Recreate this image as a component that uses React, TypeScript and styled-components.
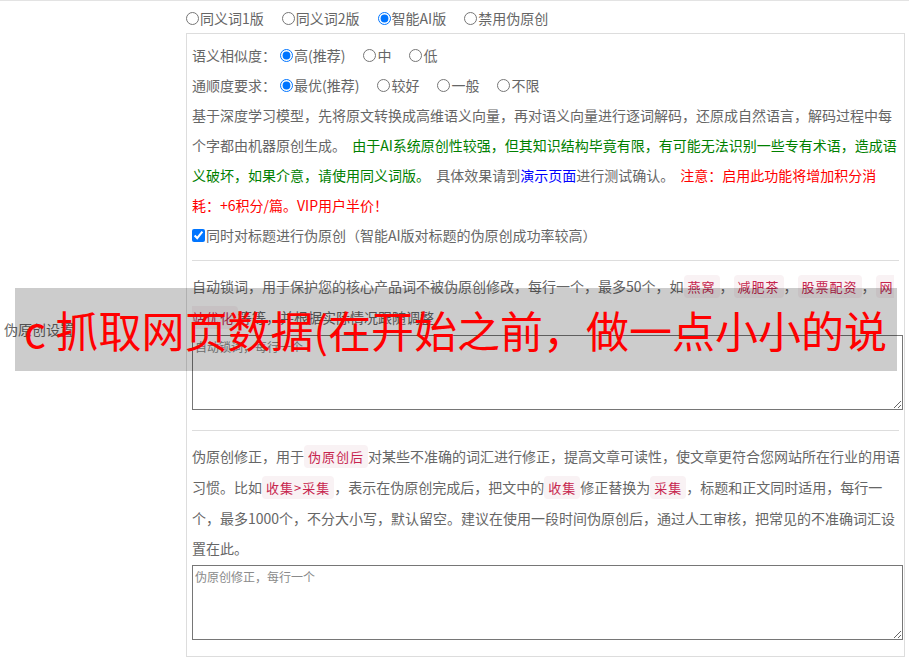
import React from 'react';
import styled, { createGlobalStyle } from 'styled-components';

const Global = createGlobalStyle`
  html, body { margin: 0; padding: 0; background: #fff; }
  body {
    font-family: "Noto Sans CJK SC", "Microsoft YaHei", sans-serif;
    font-size: 14px;
    color: #666;
  }
`;

const Table = styled.div`
  position: relative;
  width: 909px;
  border-top: 1px solid #e3e3e3;
  display: grid;
  grid-template-columns: 186px 1fr;
`;

const LabelCell = styled.div`
  display: flex;
  align-items: center;
  padding-left: 4px;
  line-height: 20px;
`;

const ContentCell = styled.div`
  padding-right: 4px;
`;

const TopRow = styled.div`
  display: flex;
  align-items: center;
  height: 30px;
  padding-top: 2px;
`;

const Row = styled.div`
  display: flex;
  align-items: center;
  height: 30px;
`;

const RowLabel = styled.span`
  margin-right: 4px;
`;

const Option = styled.label`
  display: inline-flex;
  align-items: center;
  margin-right: 18px;
  white-space: nowrap;
  input {
    width: 13px;
    height: 13px;
    margin: 0 1px 0 0;
  }
`;

const Panel = styled.div`
  border: 1px solid #ddd;
  padding: 6px 1px 16px 5px;
`;

const Para = styled.p`
  margin: 0;
  line-height: 30px;
  word-spacing: 3px;
`;

const Tone = styled.span<{ $c: string }>`
  color: ${(p) => p.$c};
`;

const Code = styled.code`
  font-family: "Noto Sans CJK SC", sans-serif;
  font-size: 13px;
  letter-spacing: 1px;
  word-spacing: 0;
  padding: 2px 4px;
  color: #c7254e;
  background: #f9f2f4;
  border-radius: 4px;
`;

const Check = styled.label`
  display: flex;
  align-items: center;
  height: 30px;
  input {
    width: 13px;
    height: 13px;
    margin: 0 1px 0 0;
  }
`;

const Divider = styled.div<{ $top?: number }>`
  height: 1px;
  background: #ddd;
  margin: ${(p) => p.$top ?? 10}px 4px 10px 0;
`;

const Area = styled.textarea`
  display: block;
  box-sizing: border-box;
  width: 100%;
  height: 75px;
  margin-top: 2px;
  border: 1px solid #767676;
  padding: 2px 2px;
  font-family: "Noto Sans CJK SC", sans-serif;
  font-size: 12px;
  color: #333;
  &::placeholder { color: #8a8a8a; }
`;

const Overlay = styled.div`
  position: absolute;
  left: 15px;
  top: 287px;
  width: 882px;
  height: 83px;
  box-sizing: border-box;
  padding-left: 9px;
  background: rgba(0, 0, 0, 0.2);
  color: #f00;
  font-family: "Noto Sans CJK SC", sans-serif;
  font-size: 43px;
  line-height: 83px;
  white-space: nowrap;
  overflow: hidden;
`;

export default function App() {
  return (
    <>
      <Global />
      <Table>
        <LabelCell>伪原创设置</LabelCell>
        <ContentCell>
          <TopRow>
            <Option><input type="radio" name="v" />同义词1版</Option>
            <Option><input type="radio" name="v" />同义词2版</Option>
            <Option><input type="radio" name="v" defaultChecked />智能AI版</Option>
            <Option><input type="radio" name="v" />禁用伪原创</Option>
          </TopRow>
          <Panel>
            <Row>
              <RowLabel>语义相似度：</RowLabel>
              <Option><input type="radio" name="s" defaultChecked />高(推荐)</Option>
              <Option><input type="radio" name="s" />中</Option>
              <Option><input type="radio" name="s" />低</Option>
            </Row>
            <Row>
              <RowLabel>通顺度要求：</RowLabel>
              <Option><input type="radio" name="f" defaultChecked />最优(推荐)</Option>
              <Option><input type="radio" name="f" />较好</Option>
              <Option><input type="radio" name="f" />一般</Option>
              <Option><input type="radio" name="f" />不限</Option>
            </Row>
            <Para>
              基于深度学习模型，先将原文转换成高维语义向量，再对语义向量进行逐词解码，还原成自然语言，解码过程中每个字都由机器原创生成。{' '}
              <Tone $c="#008000">由于AI系统原创性较强，但其知识结构毕竟有限，有可能无法识别一些专有术语，造成语义破坏，如果介意，请使用同义词版。</Tone>{' '}
              具体效果请到<Tone $c="#0000ff">演示页面</Tone>进行测试确认。{' '}
              <Tone $c="#ff0000">注意：启用此功能将增加积分消耗：+6积分/篇。VIP用户半价！</Tone>
            </Para>
            <Check>
              <input type="checkbox" defaultChecked />同时对标题进行伪原创（智能AI版对标题的伪原创成功率较高）
            </Check>
            <Divider />
            <Para>
              自动锁词，用于保护您的核心产品词不被伪原创修改，每行一个，最多50个，如<Code>燕窝</Code>，<Code>减肥茶</Code>，<Code>股票配资</Code>，<Code>网站优化</Code>等等，并根据实际情况跟随调整
            </Para>
            <Area placeholder="自动锁词，每行一个" />
            <Divider $top={20} />
            <Para>
              伪原创修正，用于<Code>伪原创后</Code>对某些不准确的词汇进行修正，提高文章可读性，使文章更符合您网站所在行业的用语习惯。比如<Code>收集&gt;采集</Code>，表示在伪原创完成后，把文中的<Code>收集</Code>修正替换为<Code>采集</Code>，标题和正文同时适用，每行一个，最多1000个，不分大小写，默认留空。建议在使用一段时间伪原创后，通过人工审核，把常见的不准确词汇设置在此。
            </Para>
            <Area placeholder="伪原创修正，每行一个" />
          </Panel>
        </ContentCell>
        <Overlay>c 抓取网页数据(在开始之前，做一点小小的说</Overlay>
      </Table>
    </>
  );
}
